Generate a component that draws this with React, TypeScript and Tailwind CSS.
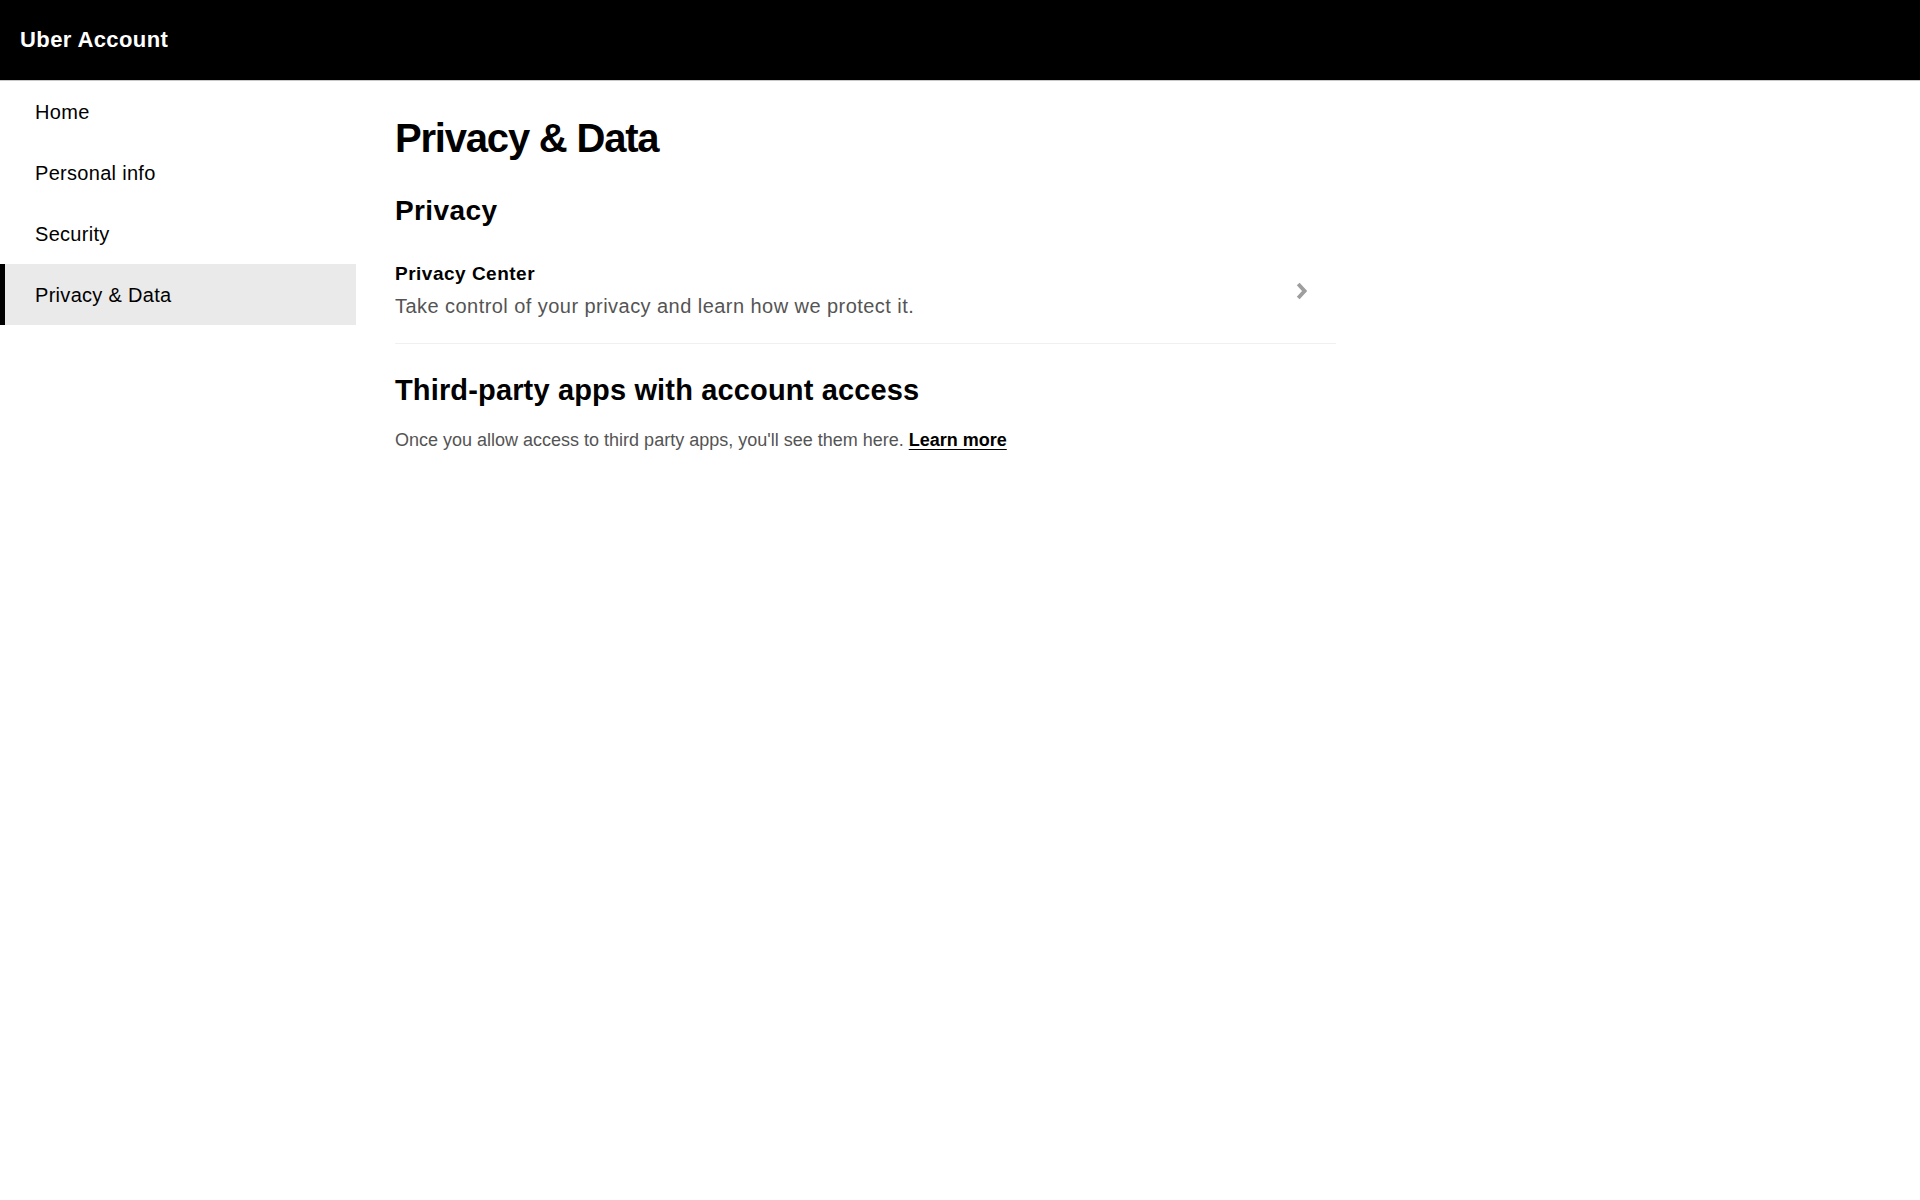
import React from "react";

const navItems = ["Home", "Personal info", "Security", "Privacy & Data"];

export default function App() {
  return (
    <div
      className="min-h-screen w-full bg-white text-black"
      style={{ fontFamily: '"Liberation Sans", Arial, sans-serif' }}
    >
      <header className="flex h-[81px] items-center border-b border-[#c9c9c9] bg-black pl-[20px]">
        <span className="text-[22px] font-bold leading-[28px] tracking-[0.4px] text-white">Uber Account</span>
      </header>
      <div className="flex">
        <nav className="flex w-[356px] shrink-0 flex-col">
          {navItems.map((item) => {
            const active = item === "Privacy & Data";
            return (
              <div
                key={item}
                className={
                  active
                    ? "flex h-[61px] items-center border-l-[5px] border-black bg-[#eaeaea] pl-[30px]"
                    : "flex h-[61px] items-center pl-[35px]"
                }
              >
                <span className="text-[20px] leading-[28px] tracking-[0.3px] text-black">{item}</span>
              </div>
            );
          })}
        </nav>
        <main className="flex-1 pl-[39px] pt-[33px]">
          <div className="w-[941px]">
            <h1 className="text-[40px] font-bold leading-[48px] tracking-[-1.2px]">Privacy &amp; Data</h1>
            <h2 className="mt-[31px] text-[28px] font-bold leading-[36px] tracking-[0.4px]">Privacy</h2>
            <div className="mt-[16px] flex items-center border-b border-[#f0f0f0] pb-[23px] pt-[17px]">
              <div className="flex-1">
                <div className="text-[19px] font-bold leading-[24px] tracking-[0.5px]">Privacy Center</div>
                <div className="mt-[6px] text-[20px] leading-[28px] tracking-[0.45px] text-[#545454]">
                  Take control of your privacy and learn how we protect it.
                </div>
              </div>
              <div className="mr-[29px] flex items-center">
                <svg width="11" height="18" viewBox="0 0 11 18" fill="none">
                  <path d="M2.2 2 L8.6 9 L2.2 16" stroke="#9e9e9e" strokeWidth="3.8" strokeLinecap="butt" strokeLinejoin="miter" />
                </svg>
              </div>
            </div>
            <h2 className="mt-[28px] text-[29px] font-bold leading-[36px] tracking-[0.15px]">Third-party apps with account access</h2>
            <p className="mt-[20px] text-[18px] leading-[24px] text-[#545454]">
              Once you allow access to third party apps, you'll see them here.{" "}
              <a className="font-bold text-black underline underline-offset-[3px]" href="#">
                Learn more
              </a>
            </p>
          </div>
        </main>
      </div>
    </div>
  );
}
